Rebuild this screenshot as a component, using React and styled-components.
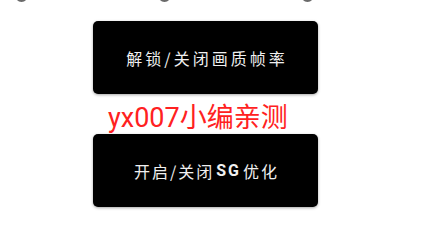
import React from 'react';
import styled, { createGlobalStyle } from 'styled-components';

const Global = createGlobalStyle`
  html, body {
    margin: 0;
    padding: 0;
    background: #ffffff;
    overflow: hidden;
  }
`;

const Page = styled.div`
  width: 421px;
  height: 240px;
  position: relative;
  font-family: Roboto, "Noto Sans CJK SC", sans-serif;
`;

const DotRow = styled.div`
  height: 2px;
  overflow: hidden;
  display: flex;
  padding-left: 15px;
  gap: 130px;
`;

const Dot = styled.div`
  width: 13px;
  height: 13px;
  border-radius: 50%;
  background: #6a6a6a;
  margin-top: -11px;
  flex: none;
`;

const Column = styled.div`
  display: flex;
  flex-direction: column;
  align-items: flex-start;
  padding: 19px 0 0 93px;
`;

const Button = styled.div`
  width: 225px;
  height: 73px;
  background: #000;
  border-radius: 5px;
  box-shadow: 0 1px 3px rgba(0, 0, 0, 0.35);
  display: flex;
  align-items: center;
  justify-content: center;
  color: #f0f0f0;
  font-size: 16px;
  letter-spacing: ${p => p.$spacing}px;
  text-indent: ${p => p.$spacing}px;
  font-family: "Noto Sans CJK SC", Roboto, sans-serif;
`;

const Latin = styled.span`
  font-family: Roboto, sans-serif;
  font-weight: 700;
`;

const Note = styled.div`
  color: #ff2121;
  font-size: 27px;
  line-height: 30px;
  margin: 9px 0 1px 15px;
  font-family: Roboto, "Noto Sans CJK SC", sans-serif;
`;

export default function App() {
  return (
    <Page>
      <Global />
      <DotRow>
        <Dot />
        <Dot />
        <Dot />
      </DotRow>
      <Column>
        <Button $spacing={3}>解锁/关闭画质帧率</Button>
        <Note>yx007小编亲测</Note>
        <Button $spacing={2}>开启/关闭<Latin>SG</Latin>优化</Button>
      </Column>
    </Page>
  );
}
